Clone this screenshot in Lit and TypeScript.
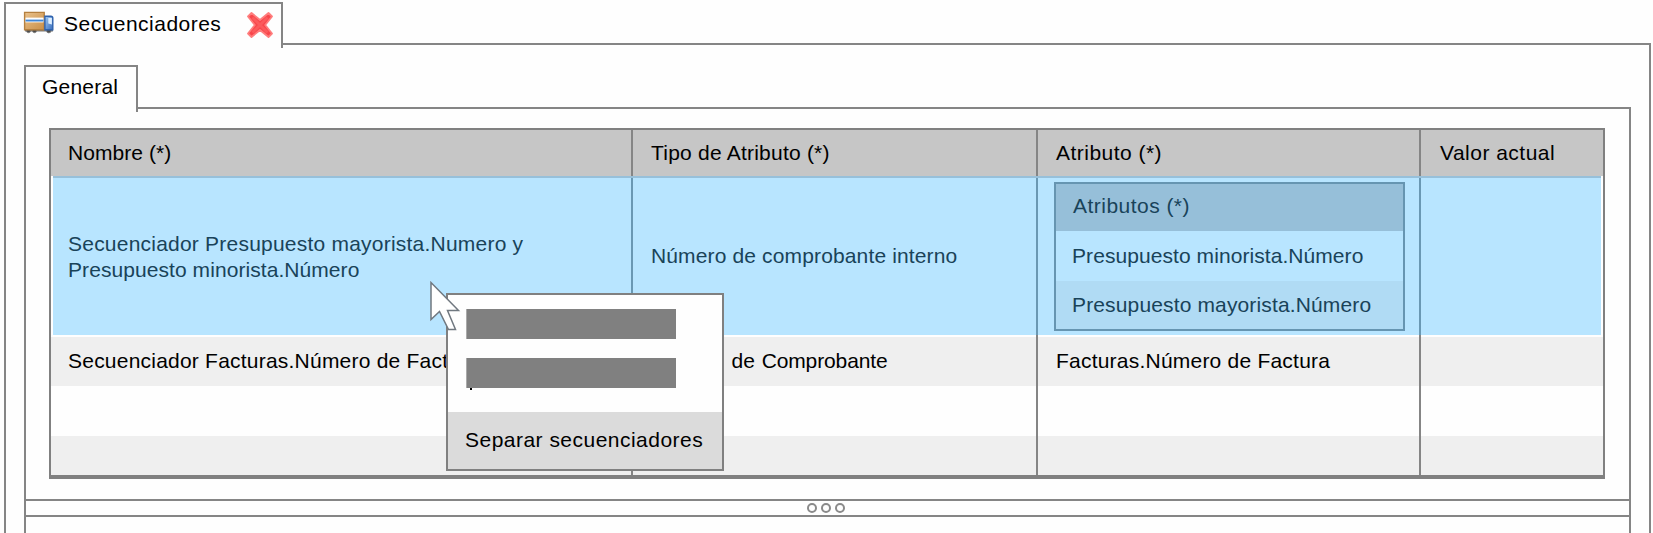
import { LitElement, html, css, svg } from "lit";
import { customElement } from "lit/decorators.js";

const truck = svg`<svg class="truck" viewBox="0 0 32 24" width="32" height="24">
  <defs>
    <linearGradient id="box" x1="0" y1="0" x2="1" y2="1"><stop offset="0" stop-color="#e9c18b"/><stop offset="1" stop-color="#c98f48"/></linearGradient>
    <linearGradient id="cab" x1="0" y1="0" x2="1" y2="1"><stop offset="0" stop-color="#9cc8f5"/><stop offset="1" stop-color="#3a6dbb"/></linearGradient>
  </defs>
  <path d="M2 18.5h28v2H2z" fill="#777"/>
  <g fill="#4a4a4a" stroke="#777" stroke-width=".8"><circle cx="5.5" cy="19.6" r="2.1"/><circle cx="11.5" cy="19.6" r="2.1"/><circle cx="25.8" cy="19.6" r="2.3"/></g>
  <path d="M1.6 1.4H21.2V18.8H1.6z" fill="url(#box)" stroke="#b5803f" stroke-width="1.4"/>
  <path d="M2.5 6.6h18v4.8h-18z" fill="#fff"/><path d="M2.5 8.6h18v1.9h-18z" fill="#3f86d6"/>
  <path d="M21.9 5.2h6q1.9 0 1.9 1.9V18.8h-7.9z" fill="url(#cab)" stroke="#2f62ad" stroke-width="1.4"/>
  <path d="M25.3 7H28.9V13.5l-3.6-1z" fill="#deefff"/>
</svg>`;

const cross = svg`<svg class="cross" viewBox="0 0 28 28" width="28" height="28">
  <path d="M5.5 2 L14 9 L22.5 2 L26 5.5 L19.2 14 L26 22.5 L22.5 26 L14 19 L5.5 26 L2 22.5 L8.8 14 L2 5.5Z" fill="#f8464b" stroke="#ff7d7d" stroke-width="1.8" stroke-linejoin="round"/>
  <path d="M6.500 6.500l15 15M21.500 6.500L6.500 21.500" stroke="#fb5a5c" stroke-width="3" fill="none"/>
</svg>`;

@customElement("app-root")
export class AppRoot extends LitElement {
  static styles = css`
    :host { display: block; position: relative; width: 1653px; height: 533px; overflow: hidden; background: #fefefe;
      font: 21px/26px "Liberation Sans", Arial, sans-serif; color: #000; white-space: nowrap; letter-spacing: .22px; }
    * { box-sizing: border-box; }
    .snug { letter-spacing: .07px; }
    .mid { letter-spacing: .14px; }
    .wide { letter-spacing: .47px; }
    .widest { letter-spacing: .48px; }
    .spread { letter-spacing: -.12px; word-spacing: 1.2px; }
    .tight { letter-spacing: -.6px; margin-right: 2.6px; }
    .window { display: flex; flex-direction: column; padding: 2px 2px 0 4px; height: 533px; }
    .strip { display: flex; flex: none; }
    .tab { border: 2px solid #858585; border-bottom: 0; display: flex; align-items: flex-start; flex: none; }
    .tab > * { flex: none; }
    .rest { flex: 1; border-bottom: 2px solid #858585; }
    .tab.main { width: 279px; height: 46px; padding: 7px 0 0 17px; margin-bottom: -4px; }
    .strip.outer { height: 43px; }
    .tab.main .title { width: 191px; padding-left: 9px; }
    .body { flex: 1; display: flex; flex-direction: column; border: solid #858585; border-width: 0 2px; padding: 20px 18px 0; min-height: 0; }
    .strip.inner { height: 44px; }
    .tab.sub { width: 114px; height: 47px; padding: 7px 0 0 16px; }
    .panel { flex: 1; min-height: 0; border: solid #858585; border-width: 0 2px; padding-top: 19px; display: flex; flex-direction: column; }
    .grid { width: 1556px; height: 351px; margin-left: 23px; border: 2px solid #808080; border-bottom-width: 4px; flex: none; display: flex; flex-direction: column; }
    .row { display: grid; grid-template-columns: 582px 405px 383px 182px; }
    .cell { border-right: 2px solid #858585; padding-left: 18px; display: flex; align-items: center; }
    .cell:first-child { padding-left: 17px; }
    .cell:last-child { border-right: 0; padding-left: 19px; }
    .head { height: 46px; background: #c6c6c6; }
    .picked { height: 159px; color: #194359; margin: 0 2px; background: #b8e5ff; border-top: 2px solid #97c0da;
      grid-template-columns: 580px 405px 383px 180px; }
    .picked .cell { border-color: #6a98b3; }
    .picked .cell:first-child { padding-left: 15px; }
    .picked .cell:nth-child(2) { padding-bottom: 2px; }
    .picked .cell.holder { padding: 4px 0 4px 16px; align-items: flex-start; }
    .plain { height: 49px; }
    .plain .cell { padding-bottom: 2px; }
    .gap { height: 2px; }
    .shade { background: #efefef; }
    .tall { height: 50px; }
    .last { height: 39px; }
    .nested { width: 351px; height: 149px; border: 2px solid #6695b1; display: flex; flex-direction: column; }
    .nested div { padding-left: 16px; display: flex; align-items: center; height: 50px; }
    .nested .nhead { background: #96bfd9; height: 47px; padding: 0 0 3px 17px; }
    .nested .alt { background: #b0dbf4; height: 48px; }
    .splitter { margin-top: 20px; height: 18px; border: solid #858585; border-width: 2px 0; display: flex; justify-content: center; align-items: center; gap: 4px; padding-right: 4px; flex: none; }
    .dot { width: 10px; height: 10px; border: 2px solid #8a8a8a; border-radius: 5px; }
    .menu { position: absolute; left: 446px; top: 293px; width: 278px; height: 178px; background: #fefefe; border: 2px solid #808080;
      display: flex; flex-direction: column; }
    .bar { width: 210px; height: 30px; margin: 14px 0 0 18px; background: #808080; border-left: 1px solid #aaa; }
    .bar.second { margin-top: 19px; }
    .speck { width: 2px; height: 2px; margin-left: 22px; background: #000; }
    .option { margin-top: auto; height: 57px; background: #dbdbdb; padding: 15px 0 0 17px; }
    .pointer { position: absolute; left: 429px; top: 280px; }
  `;

  render() {
    return html`
      <div class="window">
        <div class="strip outer">
          <div class="tab main">${truck}<span class="title widest">Secuenciadores</span>${cross}</div>
          <div class="rest"></div>
        </div>
        <div class="body">
          <div class="strip inner">
            <div class="tab sub"><span>General</span></div>
            <div class="rest"></div>
          </div>
          <div class="panel">
            <div class="grid">
              <div class="row head">
                <div class="cell"><span class="snug">Nombre (*)</span></div>
                <div class="cell"><span>Tipo de Atributo (*)</span></div>
                <div class="cell"><span class="wide">Atributo (*)</span></div>
                <div class="cell"><span class="widest">Valor actual</span></div>
              </div>
              <div class="row picked">
                <div class="cell"><span>Secuenciador Presupuesto mayorista.Numero y<br /><span class="snug">Presupuesto minorista.Número</span></span></div>
                <div class="cell"><span class="mid">Número de comprobante interno</span></div>
                <div class="cell holder">
                  <div class="nested">
                    <div class="nhead"><span class="wide">Atributos (*)</span></div>
                    <div><span class="snug">Presupuesto minorista.Número</span></div>
                    <div class="alt"><span class="mid">Presupuesto mayorista.Número</span></div>
                  </div>
                </div>
                <div class="cell"></div>
              </div>
              <div class="row gap"><div class="cell"></div><div class="cell"></div><div class="cell"></div><div class="cell"></div></div>
              <div class="row plain shade">
                <div class="cell"><span>Secuenciador Facturas.Número de Factura</span></div>
                <div class="cell"><span class="spread"><span class="tight">Número</span> de Comprobante</span></div>
                <div class="cell"><span>Facturas.Número de Factura</span></div>
                <div class="cell"></div>
              </div>
              <div class="row tall"><div class="cell"></div><div class="cell"></div><div class="cell"></div><div class="cell"></div></div>
              <div class="row last shade"><div class="cell"></div><div class="cell"></div><div class="cell"></div><div class="cell"></div></div>
            </div>
            <div class="splitter"><i class="dot"></i><i class="dot"></i><i class="dot"></i></div>
          </div>
        </div>
      </div>
      <div class="menu">
        <div class="bar"></div>
        <div class="bar second"></div>
        <div class="speck"></div>
        <div class="option"><span class="widest">Separar secuenciadores</span></div>
      </div>
      <svg class="pointer" width="32" height="52" viewBox="0 0 32 52">
        <path d="M2 2.5V39.5L10.5 31.5L19.5 49.5H26.5L18.5 30.5H29.5Z" fill="#fff" stroke="#707880" stroke-width="1.5"/>
      </svg>
    `;
  }
}
